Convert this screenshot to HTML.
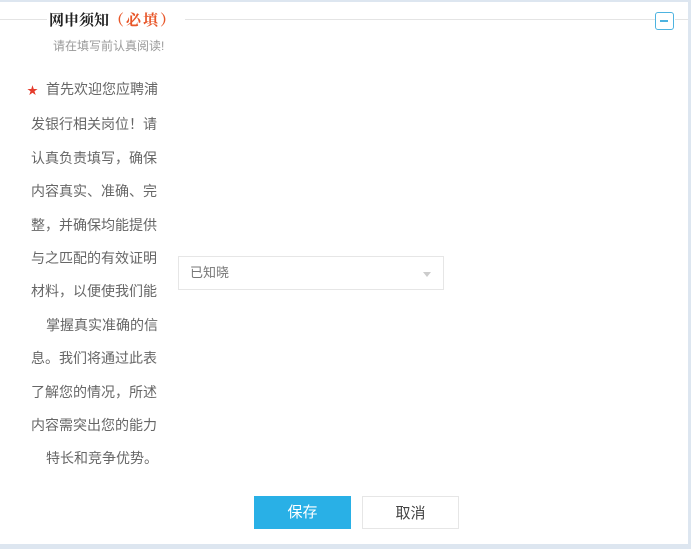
<!DOCTYPE html>
<html><head><meta charset="utf-8"><style>
body{margin:0;width:691px;height:549px;background:#dde6f0;position:relative;overflow:hidden;font-family:"Liberation Sans","Noto Sans CJK SC",sans-serif;}
.panel{position:absolute;left:0;top:2px;width:688px;height:542px;background:#fff;}
.hl{position:absolute;height:1px;background:#e4e4e4;top:17px;}
.title{position:absolute;left:49px;top:7px;font-size:15px;font-weight:bold;color:#222;font-family:"Liberation Serif","Noto Serif CJK SC",serif;}
.title span{color:#e8572a;letter-spacing:2px;}
.sub{position:absolute;left:53px;top:35px;font-size:12px;color:#999;}
.txt{position:absolute;left:31px;top:71px;width:135px;font-size:14px;line-height:33.4px;color:#666;}
.txt div{white-space:nowrap;}
.star{color:#e53b2c;font-size:11px;margin-right:8px;}
.sel{position:absolute;left:178px;top:254px;width:266px;height:34px;border:1px solid #e6e6e6;box-sizing:border-box;font-size:13px;color:#777;line-height:32px;padding-left:11px;}
.sel:after{content:"";position:absolute;right:12px;top:15px;border:4px solid transparent;border-top:5px solid #ccc;}
.btn{position:absolute;top:494px;width:97px;height:33px;line-height:33px;text-align:center;font-size:15px;box-sizing:border-box;}
.icon{position:absolute;left:655px;top:10px;width:19px;height:18px;border:1.5px solid #4db3e0;border-radius:3px;box-sizing:border-box;}
.icon:after{content:"";position:absolute;left:4px;top:7px;width:8px;height:1.5px;background:#4db3e0;}
</style></head><body>
<div class="panel">
<div class="hl" style="left:0;width:47px"></div>
<div class="hl" style="left:185px;width:470px"></div>
<div class="hl" style="left:675px;width:13px"></div>
<div class="title">网申须知<span>（必填）</span></div>
<div class="sub">请在填写前认真阅读!</div>
<div class="icon"></div>
<div class="txt">
<div style="margin-left:-4px"><span class="star">★</span>首先欢迎您应聘浦</div>
<div>发银行相关岗位！请</div>
<div>认真负责填写，确保</div>
<div>内容真实、准确、完</div>
<div>整，并确保均能提供</div>
<div>与之匹配的有效证明</div>
<div>材料，以便使我们能</div>
<div style="margin-left:15px">掌握真实准确的信</div>
<div>息。我们将通过此表</div>
<div>了解您的情况，所述</div>
<div>内容需突出您的能力</div>
<div style="margin-left:15px">特长和竞争优势。</div>
</div>
<div class="sel">已知晓</div>
<div class="btn" style="left:254px;background:#29b0e6;color:#fff">保存</div>
<div class="btn" style="left:362px;border:1px solid #e6e6e6;color:#444">取消</div>
</div>
</body></html>
